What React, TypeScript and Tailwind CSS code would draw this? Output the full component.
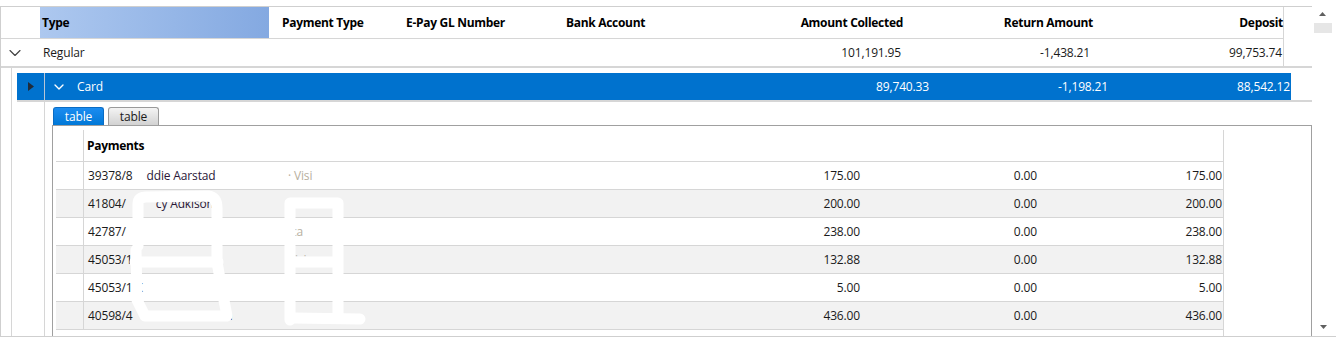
import { ChevronDown } from "lucide-react";

const payments = [
  { id: "39378/8", name: "ddie Aarstad", nameX: "pl-[14px]", kind: "· Visi", a: "175.00", b: "0.00", c: "175.00" },
  { id: "41804/", name: "cy Adkison", nameX: "pl-[30px]", kind: "WEST", a: "200.00", b: "0.00", c: "200.00" },
  { id: "42787/", name: "", nameX: "pl-[20px]", kind: "ica", a: "238.00", b: "0.00", c: "238.00" },
  { id: "45053/1", name: "", nameX: "pl-[20px]", kind: "Visi", a: "132.88", b: "0.00", c: "132.88" },
  { id: "45053/1", name: "K", nameX: "pl-[3px]", kind: "", a: "5.00", b: "0.00", c: "5.00" },
  { id: "40598/4", name: "son", nameX: "pl-[80px]", kind: "", a: "436.00", b: "0.00", c: "436.00" },
];

function Scribbles() {
  // white redaction pen strokes lying over the payment names
  return (
    <svg className="pointer-events-none absolute left-0 top-0" width="1336" height="340" viewBox="0 0 1336 340">
      <g fill="none" stroke="#ffffff" strokeWidth="11" strokeLinecap="round" strokeLinejoin="round">
        <path d="M138 246 L138 204 Q138 197 146 197 L208 196 Q217 197 217 208 L217 262 L222 290 L227 316 L145 316 L137 300 L136 250" />
        <path d="M135 262 L218 262" />
        <path d="M290 320 L290 203 L338 203 L338 318" />
        <path d="M292 262 L336 262" />
        <path d="M293 318 L360 319" />
      </g>
    </svg>
  );
}

export default function App() {
  return (
    <div className="relative h-[340px] w-[1336px] overflow-hidden bg-white pt-[6px] font-['Open_Sans',sans-serif] text-[12px] tracking-[-0.15px] text-[#1a1a1a]">
      <div className="flex h-[331px] border-b border-l border-[#cfcfcf]">
        <div className="flex w-[1311px] flex-col border-t border-[#cfcfcf]">
          {/* header + first level row */}
          <div className="border-b-2 border-[#d6d6d6]">
            <div className="w-[1283px] border-r border-[#d6d6d6]">
              <div className="flex h-[32px] items-stretch border-b border-[#d6d6d6] font-bold tracking-[-0.3px] text-black">
                <div className="w-[39px]" />
                <div className="flex w-[229px] items-center bg-gradient-to-r from-[#adc8ef] to-[#84a9e1] pl-[2px]">Type</div>
                <div className="flex w-[124px] items-center pl-[13px]">Payment Type</div>
                <div className="flex w-[160px] items-center pl-[13px]">E-Pay GL Number</div>
                <div className="flex w-[150px] items-center pl-[13px]">Bank Account</div>
                <div className="flex w-[200px] items-center justify-end">Amount Collected</div>
                <div className="flex w-[190px] items-center justify-end">Return Amount</div>
                <div className="flex w-[190px] items-center justify-end">Deposit</div>
              </div>
              <div className="flex h-[27px] items-center">
                <div className="w-[39px] pl-[4px]">
                  <ChevronDown size={20} strokeWidth={1.4} className="text-[#444]" />
                </div>
                <div className="w-[229px] pl-[3px]">Regular</div>
                <div className="w-[434px]" />
                <div className="w-[200px] pr-[2px] text-right">101,191.95</div>
                <div className="w-[190px] pr-[3px] text-right">-1,438.21</div>
                <div className="w-[190px] pr-[1px] text-right">99,753.74</div>
              </div>
            </div>
          </div>

          {/* nested level */}
          <div className="flex flex-1">
            <div className="w-[11px] border-r border-[#d6d6d6]" />
            <div className="ml-[5px] flex flex-1 flex-col pt-[5px]">
              <div className="border-b-2 border-[#d6d6d6]">
                <div className="flex h-[27px] w-[1274px] items-center bg-[#0072ce] text-white">
                  <div className="flex h-full w-[28px] items-center justify-center border-r border-[#b9c6d6]">
                    <svg width="6" height="9" viewBox="0 0 6 9">
                      <path d="M0 0 L6 4.5 L0 9 Z" fill="#1f2b3a" />
                    </svg>
                  </div>
                  <div className="flex w-[685px] items-center">
                    <ChevronDown size={16} strokeWidth={2} className="ml-[6px] text-white" />
                    <span className="ml-[10px]">Card</span>
                  </div>
                  <div className="w-[200px] pr-[1px] text-right">89,740.33</div>
                  <div className="w-[180px] pr-[2px] text-right">-1,198.21</div>
                  <div className="w-[181px] pr-[1px] text-right">88,542.12</div>
                </div>
              </div>

              <div className="flex flex-1">
                <div className="w-[28px] border-r border-[#d6d6d6]" />
                <div className="ml-[7px] flex flex-1 flex-col pt-[5px]">
                  <div className="flex h-[18px] items-end pl-[1px]">
                    <div className="flex h-[18px] w-[51px] items-center justify-center rounded-t-[3px] border border-b-0 border-[#0a6cc4] bg-gradient-to-b from-[#1a8cf0] to-[#0078d7] text-white">
                      table
                    </div>
                    <div className="ml-[4px] flex h-[18px] w-[51px] items-center justify-center rounded-t-[3px] border border-b-0 border-[#9a9a9a] bg-gradient-to-b from-[#f4f4f4] to-[#d2d2d2] text-[#1a1a1a]">
                      table
                    </div>
                  </div>
                  <div className="flex-1 border-x border-t border-[#a0a0a0] pl-[3px] pt-[4px]">
                    <div className="h-full w-[1168px] border-r border-[#d6d6d6]">
                      <div className="flex h-[32px] border-b border-[#d6d6d6]">
                        <div className="w-[28px] border-r border-[#d6d6d6]" />
                        <div className="flex items-center pl-[3px] font-bold tracking-[-0.3px] text-black">Payments</div>
                      </div>
                      {payments.map((p, i) => (
                        <div
                          key={i}
                          className={`flex h-[28px] items-center border-b border-[#d6d6d6] ${i % 2 === 1 ? "bg-[#f2f2f2]" : "bg-white"}`}
                        >
                          <div className="h-full w-[28px] border-r border-[#d6d6d6]" />
                          <div className="flex w-[200px] pl-[4px]">
                            <span>{p.id}</span>
                            <span className={`${p.nameX} text-[#2a1838]`}>{p.name}</span>
                          </div>
                          <div className="w-[378px] pl-[4px] text-[#b8b0a0]">{p.kind}</div>
                          <div className="w-[200px] pr-[2px] text-right">{p.a}</div>
                          <div className="w-[177px] pr-[2px] text-right">{p.b}</div>
                          <div className="w-[184px] pr-[1px] text-right">{p.c}</div>
                        </div>
                      ))}
                    </div>
                  </div>
                </div>
              </div>
            </div>
          </div>
        </div>

        {/* vertical scrollbar */}
        <div className="flex w-[24px] flex-col">
          <svg className="ml-[7px] mt-[6px]" width="7" height="4" viewBox="0 0 7 4">
            <path d="M0 4 L3.5 0 L7 4 Z" fill="#606060" />
          </svg>
          <div className="ml-[2px] mt-[7px] h-[10px] w-[18px] bg-[#e6e6e6]" />
          <svg className="mb-[7px] ml-[8px] mt-auto" width="7" height="4" viewBox="0 0 7 4">
            <path d="M0 0 L7 0 L3.5 4 Z" fill="#606060" />
          </svg>
        </div>
      </div>
      <Scribbles />
    </div>
  );
}
